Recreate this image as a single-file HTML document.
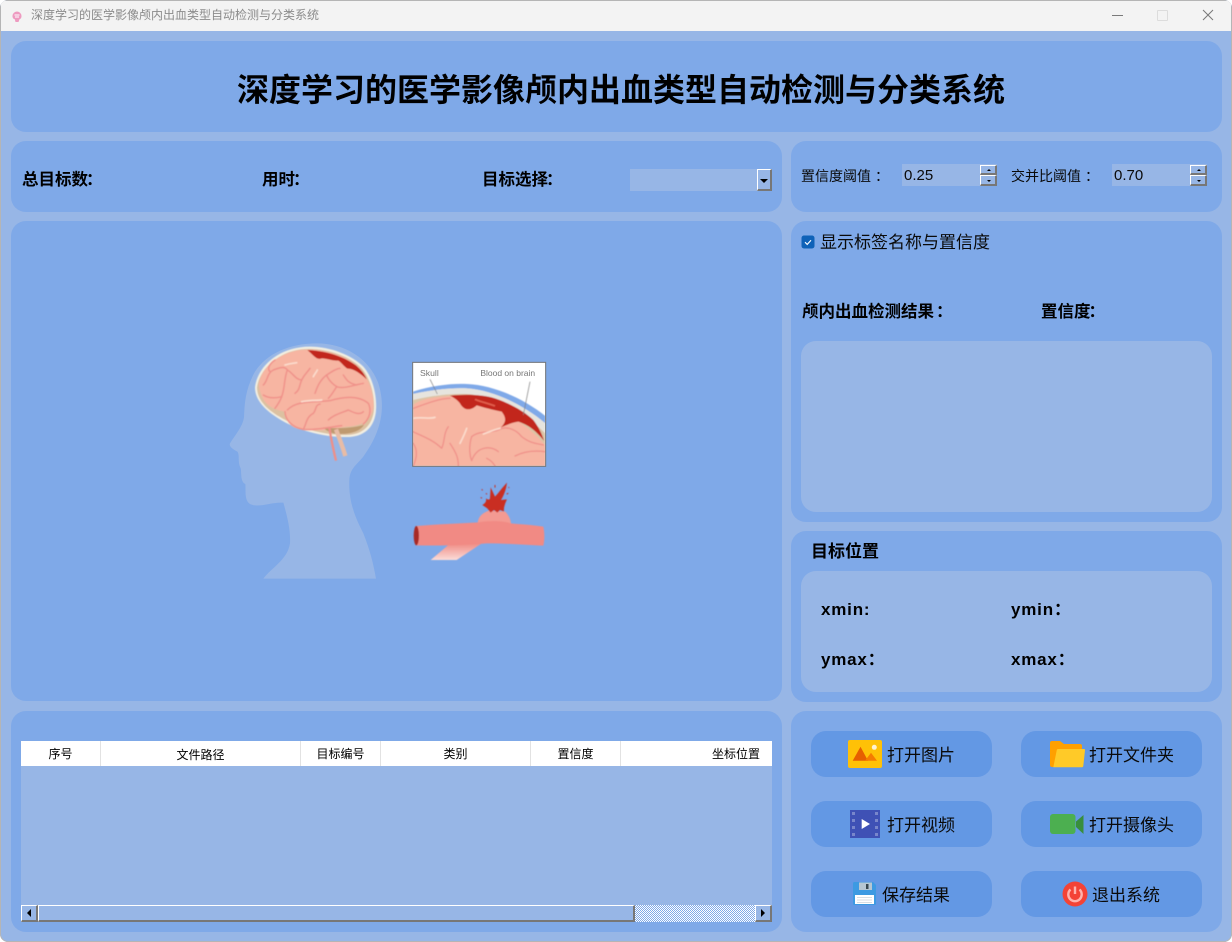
<!DOCTYPE html>
<html lang="zh">
<head>
<meta charset="utf-8">
<title>深度学习的医学影像颅内出血类型自动检测与分类系统</title>
<style>
html,body{margin:0;padding:0;width:1232px;height:942px;overflow:hidden;background:#fff}
body{position:relative;font-family:"Liberation Sans","Noto Sans CJK SC",sans-serif;color:#000}
#win{position:absolute;left:0;top:0;width:1232px;height:942px;background:#97b6e6;border-radius:8px;overflow:hidden;box-shadow:inset 0 0 0 1px #b5b5b5}
#bar{position:absolute;left:1px;top:1px;width:1230px;height:30px;background:#f3f3f3}
.a{position:absolute;white-space:nowrap}
.p{position:absolute;background:#7fa9e8;border-radius:15px}
.box{position:absolute;background:#97b6e6;border-radius:15px}
.btn{position:absolute;width:181px;height:46px;background:#6398e4;border-radius:15px}
.t{position:absolute;white-space:nowrap;font-size:17px;line-height:24px;color:#0a0a0a}
.b{font-weight:700}
.l{font-size:16.500px;line-height:24px}
.c{position:relative;left:4px}
.d{position:relative;left:-2px}
.e{position:relative;left:2px}
.x{letter-spacing:.8px}
.th{position:absolute;top:741px;height:25px;line-height:27px;font-size:12px;text-align:center;background:#fff;border-right:1px solid #e2e2e2;box-sizing:border-box;overflow:hidden;white-space:nowrap}
.sb{position:absolute;box-sizing:border-box;background:#97b6e6;border-top:1px solid #fff;border-left:1px solid #fff;border-right:2px solid #777;border-bottom:2px solid #777}
.tri{position:absolute;width:0;height:0}
svg{position:absolute;display:block}
</style>
</head>
<body>
<div id="win">
<div id="bar"></div>
<svg style="left:10px;top:9px" width="14" height="14" viewBox="0 0 14 14"><path d="M2.500 7a4.500 4.500 0 0 1 9 0c0 2-1 3-2 3.300L8.500 13h-3L4.800 10.300C3.500 10 2.500 9 2.500 7z" fill="#ee9ac0"/><path d="M4.500 6h5M5 8h4" stroke="#fff" stroke-width="1"/></svg>
<div class="a" style="left:31px;top:7px;font-size:12px;line-height:17px;color:#8b8b8b">深度学习的医学影像颅内出血类型自动检测与分类系统</div>
<div class="a" style="left:1112px;top:15px;width:11px;height:1px;background:#7a7a7a"></div>
<div class="a" style="left:1157px;top:10px;width:9px;height:9px;border:1px solid #dcdcdc;border-radius:1px"></div>
<svg style="left:1202px;top:9px" width="12" height="12" viewBox="0 0 12 12"><path d="M1 1l10 10M11 1L1 11" stroke="#777" stroke-width="1"/></svg>

<div class="p" style="left:11px;top:41px;width:1211px;height:91px"></div>
<div class="p" style="left:11px;top:141px;width:771px;height:71px"></div>
<div class="p" style="left:791px;top:141px;width:431px;height:71px"></div>
<div class="p" style="left:11px;top:221px;width:771px;height:480px"></div>
<div class="p" style="left:791px;top:221px;width:431px;height:301px"></div>
<div class="p" style="left:791px;top:531px;width:431px;height:171px"></div>
<div class="p" style="left:11px;top:711px;width:771px;height:221px"></div>
<div class="p" style="left:791px;top:711px;width:431px;height:221px"></div>

<div class="a b" style="left:237px;top:67px;font-size:32px;line-height:46px">深度学习的医学影像颅内出血类型自动检测与分类系统</div>

<div class="a b l" style="left:22px;top:168px">总目标数<span class="d">：</span></div>
<div class="a b l" style="left:262px;top:168px">用时<span class="d">：</span></div>
<div class="a b l" style="left:482px;top:168px">目标选择<span class="d">：</span></div>
<div class="a" style="left:630px;top:169px;width:142px;height:22px;background:#97b6e6"></div>
<div class="sb" style="left:757px;top:169px;width:15px;height:22px"></div>
<div class="tri" style="left:760px;top:179px;border-left:4px solid transparent;border-right:4px solid transparent;border-top:4px solid #000"></div>

<div class="a" style="left:801px;top:166px;font-size:14px;line-height:21px;color:#0a0a0a">置信度阈值<span class="c">：</span></div>
<div class="a" style="left:902px;top:164px;width:95px;height:22px;background:#97b6e6"></div>
<div class="a" style="left:904px;top:165px;font-size:15px;line-height:21px;color:#0a0a0a">0.25</div>
<div class="sb" style="left:980px;top:165px;width:17px;height:10px"></div>
<div class="sb" style="left:980px;top:175px;width:17px;height:11px"></div>
<div class="tri" style="left:987px;top:169px;border-left:2px solid transparent;border-right:2px solid transparent;border-bottom:2px solid #000"></div>
<div class="tri" style="left:987px;top:180px;border-left:2px solid transparent;border-right:2px solid transparent;border-top:2px solid #000"></div>

<div class="a" style="left:1011px;top:166px;font-size:14px;line-height:21px;color:#0a0a0a">交并比阈值<span class="c">：</span></div>
<div class="a" style="left:1112px;top:164px;width:95px;height:22px;background:#97b6e6"></div>
<div class="a" style="left:1114px;top:165px;font-size:15px;line-height:21px;color:#0a0a0a">0.70</div>
<div class="sb" style="left:1190px;top:165px;width:17px;height:10px"></div>
<div class="sb" style="left:1190px;top:175px;width:17px;height:11px"></div>
<div class="tri" style="left:1197px;top:169px;border-left:2px solid transparent;border-right:2px solid transparent;border-bottom:2px solid #000"></div>
<div class="tri" style="left:1197px;top:180px;border-left:2px solid transparent;border-right:2px solid transparent;border-top:2px solid #000"></div>

<!-- medical illustration -->
<svg style="left:200px;top:330px" width="360" height="260" viewBox="0 0 1080 780">
<defs>
<filter id="bl" x="-5%" y="-5%" width="110%" height="110%"><feGaussianBlur stdDeviation="1.300"/></filter>
<linearGradient id="fade" x1="0" y1="0" x2="0" y2="1"><stop offset="0" stop-color="#f08b84"/><stop offset="1" stop-color="#fbdcd8"/></linearGradient>
<clipPath id="inset"><rect x="639" y="98" width="397" height="310"/></clipPath>
</defs>
<path d="M190 746C215 712 262 690 270 640C272 600 262 560 250 518C215 515 175 535 150 522C132 510 138 480 136 462C120 455 125 425 122 415C112 395 120 375 112 365C100 358 86 350 90 340C105 315 128 290 132 262C134 220 135 180 165 125C200 70 270 40 350 40C440 40 510 90 535 160C560 240 540 310 490 380C470 405 450 415 448 450C445 520 470 570 490 610C510 660 520 700 528 746Z" fill="#97b6e6"/>
<g filter="url(#bl)">
<path d="M165 172C172 115 225 62 300 52C370 42 450 70 490 110C525 150 532 215 527 250C520 295 490 321 440 321C370 322 290 300 235 265C195 240 165 210 165 172Z" fill="#f3efe2"/>
<path d="M171 172C178 120 230 68 302 58C370 50 448 76 485 115C518 153 526 215 521 248C514 288 487 315 440 315C370 316 295 295 238 260C198 236 171 208 171 172Z" fill="#dcc1a1"/>
<path d="M177 160C185 112 235 70 300 60C360 54 430 72 472 108C505 140 524 190 520 235C514 268 492 287 440 290C400 298 350 305 310 300C275 295 258 280 255 245C225 240 195 228 184 195C179 182 176 172 177 160Z" fill="#f7b5a2"/>
<path d="M370 292C420 298 470 292 492 284C482 305 450 312 420 312C400 312 380 305 370 292Z" fill="#bf9a70"/>
<path d="M388 292C392 320 398 350 408 392" stroke="#ee8f88" stroke-width="7" fill="none"/>
<path d="M408 298C418 325 428 350 436 378" stroke="#e8bca6" stroke-width="13" fill="none"/>
<path d="M322 60C370 62 425 75 468 106C484 120 494 132 500 148C480 130 460 115 442 116C430 108 425 98 415 92C395 92 380 85 365 85C350 92 340 75 322 60Z" fill="#c2281c"/>
<g fill="none" stroke="#f0928a" stroke-width="4.500" stroke-linecap="round" stroke-linejoin="round">
<path d="M262 240C290 210 340 218 390 212C430 200 475 195 505 220C515 240 510 265 490 282"/>
<path d="M255 245C255 268 275 292 310 298C345 302 395 290 425 287"/>
<path d="M310 298C320 280 318 262 340 250C350 238 345 225 360 222"/>
<path d="M385 270C400 255 420 250 445 240C465 250 480 255 490 245"/>
<path d="M190 165C205 150 200 130 220 120C240 112 255 108 262 120C280 130 285 148 305 150"/>
<path d="M262 120C252 145 255 175 245 200C240 215 225 235 225 235"/>
<path d="M190 195C205 205 225 205 245 200"/>
<path d="M330 115C320 130 315 130 305 150C298 165 300 180 285 190"/>
<path d="M345 190C352 170 360 150 380 135C395 125 410 115 420 115"/>
<path d="M380 135C385 150 395 160 410 170C430 178 460 165 490 160"/>
<path d="M410 170C400 185 395 195 385 205"/>
<path d="M430 135C440 150 445 160 470 165"/>
<path d="M210 125C200 115 210 100 225 90"/>
</g>
<path d="M255 105C270 100 280 100 290 98M305 215C330 210 350 212 365 210M340 140C345 130 350 125 352 120" stroke="#fbdccd" stroke-width="5" fill="none" stroke-linecap="round"/>
</g>

<!-- inset -->
<g clip-path="url(#inset)">
<rect x="639" y="98" width="397" height="310" fill="#fff"/>
<g filter="url(#bl)">
<path d="M639 185C700 165 760 160 800 162C880 165 970 205 1036 258V280C970 225 880 180 800 175C760 173 700 178 639 192Z" fill="#7fa9e8"/>
<path d="M639 192C700 178 760 173 800 175C880 180 970 225 1036 280V310C970 245 880 195 800 192C760 190 700 195 639 210Z" fill="#e6e4de"/>
<path d="M639 210C700 195 760 190 800 192C880 195 970 245 1036 310V408H639Z" fill="#dcc4a6"/>
<path d="M639 225C660 208 700 200 750 198C850 205 960 260 1036 345V408H639Z" fill="#f7b5a2"/>
<path d="M750 197C790 192 850 193 885 205C930 220 975 245 1000 270C1015 290 1025 310 1032 332C1005 300 985 285 955 275C935 278 920 285 903 292C920 275 918 262 905 245C880 240 850 232 830 226C810 245 790 240 780 220C770 208 760 202 750 197Z" fill="#c2281c"/>
<path d="M825 208C840 215 865 220 885 228" stroke="#e2604e" stroke-width="5" fill="none"/>
<g fill="none" stroke="#f0928a" stroke-width="4" stroke-linecap="round" stroke-linejoin="round">
<path d="M639 305C670 320 700 330 725 355C735 335 730 310 745 290"/>
<path d="M639 340C655 360 650 385 640 408"/>
<path d="M750 340C770 370 775 385 775 408"/>
<path d="M815 320C805 350 810 380 815 392C830 350 870 345 895 365"/>
<path d="M815 320C840 300 870 310 895 300C920 285 950 300 965 320C990 340 1010 340 1030 345"/>
<path d="M945 378C970 365 1000 360 1035 365"/>
<path d="M860 385C875 392 880 400 885 408"/>
<path d="M640 235C680 220 720 205 750 205"/>
</g>
<path d="M640 265C665 260 690 268 705 262M850 312C870 305 885 298 900 295M780 340C790 320 795 310 800 295" stroke="#fbdccd" stroke-width="5" fill="none" stroke-linecap="round"/>
<path d="M690 148L712 192M990 155L970 255" stroke="#7d7d7d" stroke-width="2" fill="none"/>
</g>
<text x="660" y="138" font-family="'Liberation Sans',sans-serif" font-size="26" fill="#777">Skull</text>
<text x="841" y="138" font-family="'Liberation Sans',sans-serif" font-size="25.500" fill="#777">Blood on brain</text>
</g>
<rect x="638" y="97" width="399" height="312" fill="none" stroke="#777" stroke-width="3"/>

<!-- vessel -->
<g filter="url(#bl)">
<path d="M692 690L745 645L845 640L770 690Z" fill="url(#fade)"/>
<path d="M833 580C835 562 842 552 866 542L916 545C925 555 933 568 933 584L880 600Z" fill="#f39a92"/>
<path d="M650 588C720 582 780 580 835 577C880 570 920 575 932 580C965 583 1000 585 1030 590C1034 610 1034 630 1030 647C980 645 920 640 860 640C800 645 720 648 650 646Z" fill="#f18a84"/>
<ellipse cx="649" cy="617" rx="8" ry="29" fill="#a72a25"/>
<path d="M847 525C855 520 860 515 858 505C865 510 868 510 870 505L872 472L885 500C895 490 905 475 921 458C918 480 912 495 903 510L921 508C915 520 910 535 912 545L900 540L892 548L882 540L872 548L862 535Z" fill="#c92d20"/>
<path d="M845 478l3 3M858 490l3 3M885 465v8M925 472l3 1M920 492l5-2M842 503l4 1" stroke="#c92d20" stroke-width="3"/>
</g>
</svg>

<svg style="left:801px;top:235px" width="14" height="14" viewBox="0 0 14 14"><rect x="0.500" y="0.500" width="13" height="13" rx="2.500" fill="#0f62b8"/><path d="M4 7.200l2.200 2.200L10 5.200" stroke="#fff" stroke-width="1.100" fill="none"/></svg>
<div class="t" style="left:820px;top:231px">显示标签名称与置信度</div>
<div class="a b l" style="left:802px;top:300px">颅内出血检测结果<span class="e">：</span></div>
<div class="a b l" style="left:1041px;top:300px">置信度<span class="d">：</span></div>
<div class="box" style="left:801px;top:341px;width:411px;height:171px"></div>

<div class="a b" style="left:811px;top:540px;font-size:17px;line-height:24px">目标位置</div>
<div class="box" style="left:801px;top:571px;width:411px;height:121px"></div>
<div class="a b x" style="left:821px;top:598px;font-size:17px;line-height:24px">xmin:</div>
<div class="a b x" style="left:1011px;top:598px;font-size:17px;line-height:24px">ymin：</div>
<div class="a b x" style="left:821px;top:648px;font-size:17px;line-height:24px">ymax：</div>
<div class="a b x" style="left:1011px;top:648px;font-size:17px;line-height:24px">xmax：</div>

<!-- table -->
<div class="a" style="left:21px;top:766px;width:751px;height:156px;background:#97b6e6"></div>
<div class="th" style="left:21px;width:80px">序号</div>
<div class="th" style="left:101px;width:200px;line-height:29px">文件路径</div>
<div class="th" style="left:301px;width:80px">目标编号</div>
<div class="th" style="left:381px;width:150px">类别</div>
<div class="th" style="left:531px;width:90px">置信度</div>
<div class="th" style="left:621px;width:151px;text-align:left;padding-left:91px;border-right:0">坐标位置</div>
<div class="a" style="left:635px;top:905px;width:120px;height:17px;background:repeating-conic-gradient(#fff 0 25%,#7fa9e8 0 50%) 0 0/2px 2px"></div>
<div class="sb" style="left:21px;top:905px;width:17px;height:17px"></div>
<div class="tri" style="left:27px;top:909px;border-top:4px solid transparent;border-bottom:4px solid transparent;border-right:4px solid #000"></div>
<div class="sb" style="left:38px;top:905px;width:597px;height:17px"></div>
<div class="sb" style="left:755px;top:905px;width:17px;height:17px"></div>
<div class="tri" style="left:761px;top:909px;border-top:4px solid transparent;border-bottom:4px solid transparent;border-left:4px solid #000"></div>

<!-- buttons -->
<div class="btn" style="left:811px;top:731px"></div>
<div class="btn" style="left:1021px;top:731px"></div>
<div class="btn" style="left:811px;top:801px"></div>
<div class="btn" style="left:1021px;top:801px"></div>
<div class="btn" style="left:811px;top:871px"></div>
<div class="btn" style="left:1021px;top:871px"></div>

<svg style="left:848px;top:740px" width="34" height="29" viewBox="0 0 34 29"><rect x="0" y="0" width="34" height="28" rx="2" fill="#ffc107"/><path d="M4.700 20.700L12.500 6.700L20 20.700z" fill="#e65f00"/><path d="M17 20.700l6-8 6 8z" fill="#f57c00"/><circle cx="26.300" cy="7.300" r="2.500" fill="#fff3d0"/></svg>
<div class="t" style="left:887px;top:744px">打开图片</div>

<svg style="left:1050px;top:740px" width="36" height="29" viewBox="0 0 36 29"><path d="M0 3a2 2 0 0 1 2-2h8l4 3h16a2 2 0 0 1 2 2v21H2a2 2 0 0 1-2-2z" fill="#ffa000"/><path d="M6.700 10.500a1.500 1.500 0 0 1 1.500-1.500H34a1 1 0 0 1 1 1.200L33.300 26a1.500 1.500 0 0 1-1.500 1.300H3.300z" fill="#ffca28"/></svg>
<div class="t" style="left:1089px;top:744px">打开文件夹</div>

<svg style="left:850px;top:810px" width="30" height="28" viewBox="0 0 30 28"><rect width="30" height="28" fill="#3f51b5"/><g fill="#7986cb"><rect x="2" y="2" width="3" height="3"/><rect x="2" y="9" width="3" height="3"/><rect x="2" y="16" width="3" height="3"/><rect x="2" y="23" width="3" height="3"/><rect x="25" y="2" width="3" height="3"/><rect x="25" y="9" width="3" height="3"/><rect x="25" y="16" width="3" height="3"/><rect x="25" y="23" width="3" height="3"/></g><path d="M11.700 9L20 14l-8.300 5z" fill="#fff"/></svg>
<div class="t" style="left:887px;top:814px">打开视频</div>

<svg style="left:1050px;top:814px" width="35" height="21" viewBox="0 0 35 21"><rect x="0" y="0" width="25.500" height="20" rx="3" fill="#4caf50"/><path d="M26 7.500L33.500 1v19L26 13z" fill="#388e3c"/></svg>
<div class="t" style="left:1089px;top:814px">打开摄像头</div>

<svg style="left:853px;top:882px" width="24" height="24" viewBox="0 0 24 24"><path d="M0 1.500A1.500 1.500 0 0 1 1.500 0H20l3 3v18.500a1.500 1.500 0 0 1-1.500 1.500h-20A1.500 1.500 0 0 1 0 21.500z" fill="#3d9ae2"/><rect x="6" y="0.500" width="13" height="7.500" fill="#b6c6d2"/><rect x="13" y="2" width="2.500" height="5" fill="#37474f"/><rect x="2" y="13" width="19" height="9" fill="#fff"/><path d="M4 15.500h15M4 18h15M4 20.500h15" stroke="#d8dee3" stroke-width="1"/></svg>
<div class="t" style="left:882px;top:884px">保存结果</div>

<svg style="left:1062px;top:881px" width="26" height="26" viewBox="0 0 26 26"><circle cx="13" cy="13" r="12.500" fill="#f44336"/><path d="M8.500 8.500a6.700 6.700 0 1 0 9 0" fill="none" stroke="#ffb3ad" stroke-width="2.400"/><path d="M13 5.500V13" stroke="#ffb3ad" stroke-width="2.400"/></svg>
<div class="t" style="left:1092px;top:884px">退出系统</div>
</div>
</body>
</html>
